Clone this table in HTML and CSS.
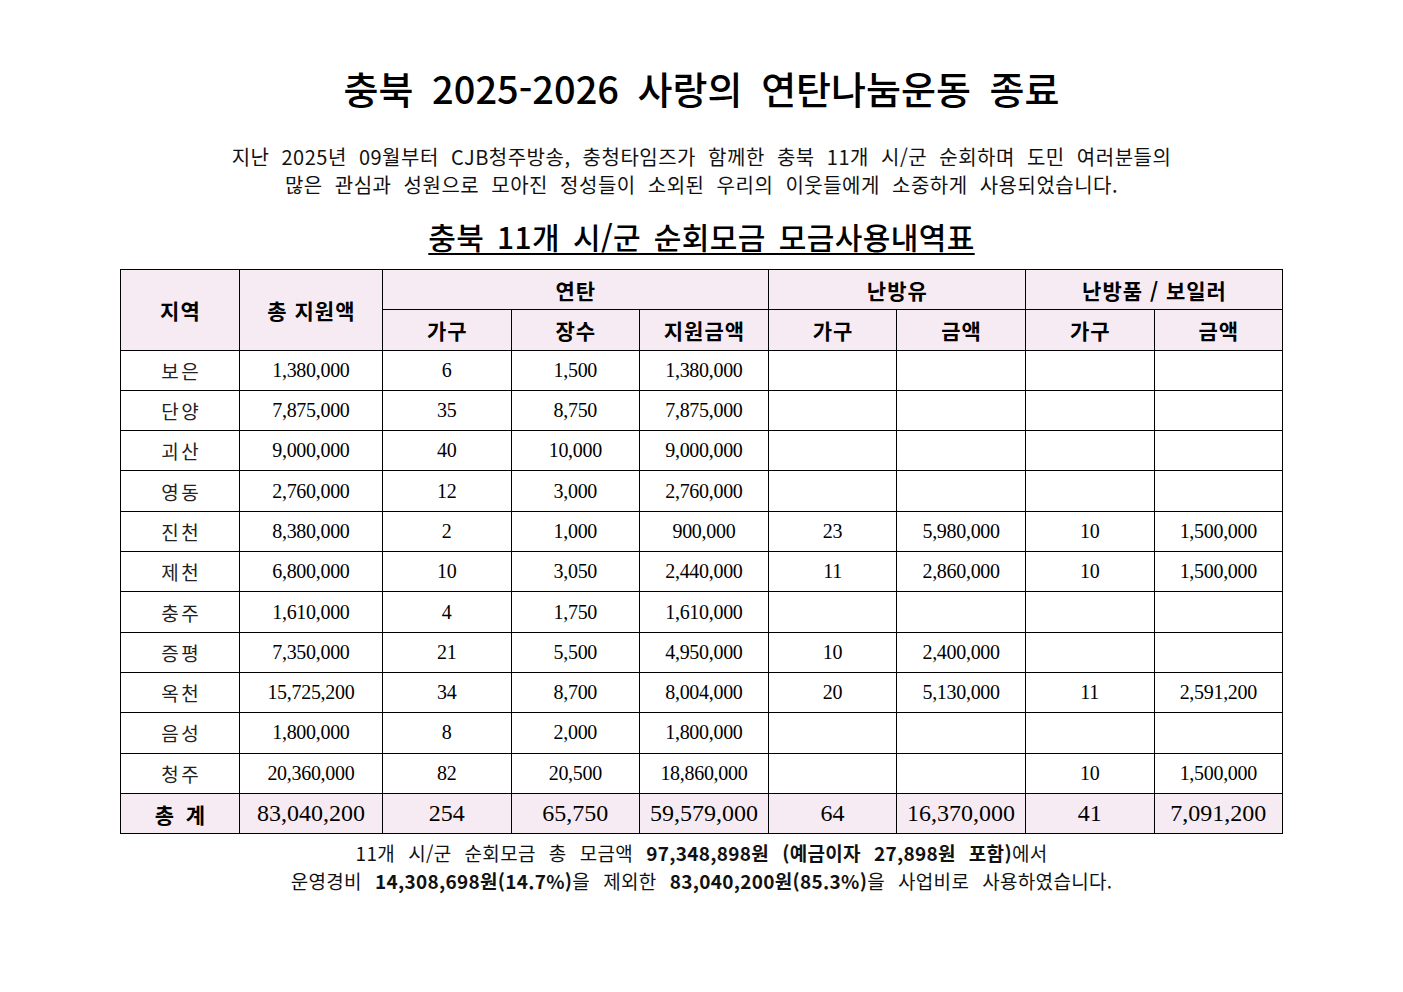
FILE: index.html
```html
<!DOCTYPE html>
<html lang="ko">
<head>
<meta charset="utf-8">
<title>충북 2025-2026 사랑의 연탄나눔운동 종료</title>
<link rel="stylesheet" href="styles.css">
</head>
<body>
<main class="page">
  <h1 class="title">충북 2025-2026 사랑의 연탄나눔운동 종료</h1>
  <p class="intro">지난 2025년 09월부터 CJB청주방송, 충청타임즈가 함께한 충북 11개 시/군 순회하며 도민 여러분들의<br>많은 관심과 성원으로 모아진 정성들이 소외된 우리의 이웃들에게 소중하게 사용되었습니다.</p>
  <h2 class="subtitle">충북 11개 시/군 순회모금 모금사용내역표</h2>
  <table class="usage">
    <colgroup>
      <col class="c-region"><col class="c-total"><col class="c-std"><col class="c-std"><col class="c-std"><col class="c-std"><col class="c-std"><col class="c-std"><col class="c-std">
    </colgroup>
    <thead>
      <tr>
        <th rowspan="2">지역</th>
        <th rowspan="2">총 지원액</th>
        <th colspan="3">연탄</th>
        <th colspan="2">난방유</th>
        <th colspan="2">난방품 / 보일러</th>
      </tr>
      <tr>
        <th>가구</th><th>장수</th><th>지원금액</th>
        <th>가구</th><th>금액</th>
        <th>가구</th><th>금액</th>
      </tr>
    </thead>
    <tbody>
      <tr><td class="name">보은</td><td>1,380,000</td><td>6</td><td>1,500</td><td>1,380,000</td><td></td><td></td><td></td><td></td></tr>
      <tr><td class="name">단양</td><td>7,875,000</td><td>35</td><td>8,750</td><td>7,875,000</td><td></td><td></td><td></td><td></td></tr>
      <tr><td class="name">괴산</td><td>9,000,000</td><td>40</td><td>10,000</td><td>9,000,000</td><td></td><td></td><td></td><td></td></tr>
      <tr><td class="name">영동</td><td>2,760,000</td><td>12</td><td>3,000</td><td>2,760,000</td><td></td><td></td><td></td><td></td></tr>
      <tr><td class="name">진천</td><td>8,380,000</td><td>2</td><td>1,000</td><td>900,000</td><td>23</td><td>5,980,000</td><td>10</td><td>1,500,000</td></tr>
      <tr><td class="name">제천</td><td>6,800,000</td><td>10</td><td>3,050</td><td>2,440,000</td><td>11</td><td>2,860,000</td><td>10</td><td>1,500,000</td></tr>
      <tr><td class="name">충주</td><td>1,610,000</td><td>4</td><td>1,750</td><td>1,610,000</td><td></td><td></td><td></td><td></td></tr>
      <tr><td class="name">증평</td><td>7,350,000</td><td>21</td><td>5,500</td><td>4,950,000</td><td>10</td><td>2,400,000</td><td></td><td></td></tr>
      <tr><td class="name">옥천</td><td>15,725,200</td><td>34</td><td>8,700</td><td>8,004,000</td><td>20</td><td>5,130,000</td><td>11</td><td>2,591,200</td></tr>
      <tr><td class="name">음성</td><td>1,800,000</td><td>8</td><td>2,000</td><td>1,800,000</td><td></td><td></td><td></td><td></td></tr>
      <tr><td class="name">청주</td><td>20,360,000</td><td>82</td><td>20,500</td><td>18,860,000</td><td></td><td></td><td>10</td><td>1,500,000</td></tr>
    </tbody>
    <tfoot>
      <tr class="sum"><th>총 계</th><td>83,040,200</td><td>254</td><td>65,750</td><td>59,579,000</td><td>64</td><td>16,370,000</td><td>41</td><td>7,091,200</td></tr>
    </tfoot>
  </table>
  <p class="note">11개 시/군 순회모금 총 모금액 <b>97,348,898원 (예금이자 27,898원 포함)</b>에서<br>운영경비 <b>14,308,698원(14.7%)</b>을 제외한 <b>83,040,200원(85.3%)</b>을 사업비로 사용하였습니다.</p>
</main>
</body>
</html>
```

FILE: styles.css
```css
html, body {
  margin: 0;
  padding: 0;
  background: #ffffff;
  color: #000000;
}

body {
  font-family: "Noto Sans CJK KR", "Noto Sans", sans-serif;
}

.page {
  width: 1162px;
  margin: 0 auto;
  display: flex;
  flex-direction: column;
  align-items: center;
}

.title {
  margin: 63px 0 0;
  font-size: 38px;
  line-height: 50px;
  font-weight: 500;
  word-spacing: 8px;
  text-align: center;
  white-space: nowrap;
}

.intro {
  margin: 30px 0 0;
  font-size: 20px;
  line-height: 28px;
  font-weight: 400;
  letter-spacing: 0.5px;
  word-spacing: 6px;
  text-align: center;
  white-space: nowrap;
  color: #111;
}

.subtitle {
  margin: 18px 0 0;
  font-size: 30px;
  line-height: 38px;
  font-weight: 500;
  letter-spacing: 0.4px;
  word-spacing: 4px;
  text-decoration: underline;
  text-decoration-thickness: 2px;
  text-underline-offset: 4px;
  text-align: center;
  white-space: nowrap;
}

.usage {
  margin-top: 14px;
  width: 1162px;
  border-collapse: collapse;
  table-layout: fixed;
  border: 1px solid #000;
}

.c-region { width: 119px; }
.c-total { width: 143px; }
.c-std { width: 128.6px; }

.usage th,
.usage td {
  border: 1px solid #000;
  height: 39.3px;
  padding: 0;
  text-align: center;
  vertical-align: middle;
}

.usage thead th {
  background: #f7ebf3;
  font-family: "Noto Sans CJK KR", sans-serif;
  font-size: 21px;
  font-weight: 700;
  letter-spacing: 1px;
  padding-left: 1px;
}

.usage tbody td {
  font-family: "Liberation Serif", "Noto Sans CJK KR", serif;
  font-size: 20px;
  letter-spacing: -0.3px;
}

.usage tbody td.name {
  font-family: "Noto Sans CJK KR", sans-serif;
  font-size: 19px;
  letter-spacing: 2.5px;
  padding-left: 2.5px;
  color: #222;
}

.usage .sum th,
.usage .sum td {
  background: #f7ebf3;
}

.usage .sum th {
  font-size: 21px;
  font-weight: 700;
  word-spacing: 6px;
}

.usage .sum td {
  font-family: "Liberation Serif", serif;
  font-size: 24px;
  letter-spacing: 0;
}

.note {
  margin: 5px 0 0;
  font-size: 19px;
  line-height: 28px;
  letter-spacing: 0.3px;
  word-spacing: 7.5px;
  text-align: center;
  white-space: nowrap;
  color: #111;
}

.note b {
  font-weight: 700;
}
```
